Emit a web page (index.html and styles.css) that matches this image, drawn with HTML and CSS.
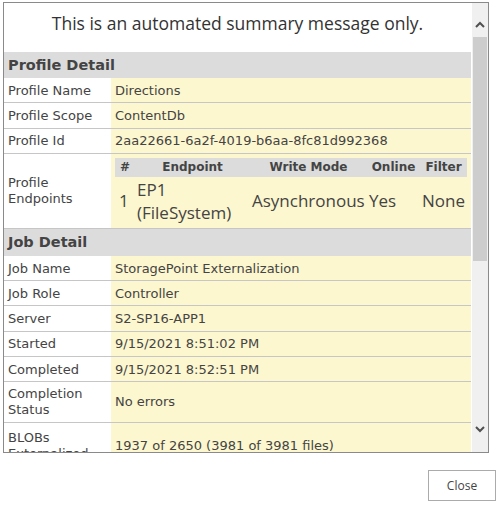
FILE: index.html
```html
<!DOCTYPE html>
<html lang="en">
<head>
  <meta charset="UTF-8">
  <title>Job Summary</title>
  <link rel="stylesheet" href="styles.css">
</head>
<body>
  <div class="frame">
    <div class="scroll-area">
      <div class="intro">This is an automated summary message only.</div>

      <div class="section">Profile Detail</div>
      <table class="details">
        <tr><td class="label">Profile Name</td><td class="value">Directions</td></tr>
        <tr><td class="label">Profile Scope</td><td class="value">ContentDb</td></tr>
        <tr><td class="label">Profile Id</td><td class="value">2aa22661-6a2f-4019-b6aa-8fc81d992368</td></tr>
        <tr class="ep-row">
          <td class="label">Profile Endpoints</td>
          <td class="value">
            <table class="endpoints">
              <tr>
                <th class="c-num">#</th>
                <th class="c-ep">Endpoint</th>
                <th class="c-mode">Write Mode</th>
                <th class="c-online">Online</th>
                <th>Filter</th>
              </tr>
              <tr><td>1</td><td>EP1 (FileSystem)</td><td>Asynchronous</td><td>Yes</td><td>None</td></tr>
            </table>
          </td>
        </tr>
      </table>

      <div class="section section-job">Job Detail</div>
      <table class="details">
        <tr><td class="label">Job Name</td><td class="value">StoragePoint Externalization</td></tr>
        <tr><td class="label">Job Role</td><td class="value">Controller</td></tr>
        <tr><td class="label">Server</td><td class="value">S2-SP16-APP1</td></tr>
        <tr><td class="label">Started</td><td class="value">9/15/2021 8:51:02 PM</td></tr>
        <tr><td class="label">Completed</td><td class="value">9/15/2021 8:52:51 PM</td></tr>
        <tr class="tall"><td class="label">Completion Status</td><td class="value">No errors</td></tr>
        <tr class="tall last"><td class="label">BLOBs Externalized</td><td class="value">1937 of 2650 (3981 of 3981 files)</td></tr>
      </table>
    </div>

    <div class="scrollbar">
      <div class="arrow arrow-up">
        <svg width="10" height="7" viewBox="0 0 10 7"><path d="M1 6 L5 2 L9 6" fill="none" stroke="#505050" stroke-width="2"/></svg>
      </div>
      <div class="track">
        <div class="thumb"></div>
      </div>
      <div class="arrow arrow-down">
        <svg width="10" height="7" viewBox="0 0 10 7"><path d="M1 1 L5 5 L9 1" fill="none" stroke="#505050" stroke-width="2"/></svg>
      </div>
    </div>
  </div>

  <div class="footer">
    <button class="btn">Close</button>
  </div>
</body>
</html>
```

FILE: styles.css
```css
body {
  margin: 0;
  padding: 2px 0 0 3px;
  background: #fff;
  font-family: "DejaVu Sans", Verdana, sans-serif;
  color: #444;
}

.frame {
  display: flex;
  width: 484px;
  height: 449px;
  border: 1px solid #8a8a8a;
  overflow: hidden;
}

.scroll-area {
  flex: 1;
  overflow: hidden;
}

.intro {
  height: 49px;
  line-height: 40px;
  text-align: center;
  font-family: "Open Sans", "Noto Sans", sans-serif;
  font-size: 17.5px;
  color: #333;
}

.section {
  height: 26px;
  line-height: 26px;
  padding-left: 4px;
  background: #dcdcdc;
  font-size: 14.5px;
  font-weight: bold;
  color: #444;
}

.section-job {
  height: 27px;
  line-height: 27px;
}

.details {
  width: 100%;
  border-collapse: collapse;
}

.details > tbody > tr > td {
  border-bottom: 1px solid #c6c6c6;
  padding: 0 4px;
  height: 24.3px;
  font-size: 13px;
  vertical-align: middle;
}

.details .label {
  width: 99px;
  background: #fff;
}

.details .value {
  background: #fdf7cf;
}

.details .tall > td {
  height: 40px;
  line-height: 16px;
}

.details .last > td {
  height: 46px;
}

.details .ep-row > td {
  line-height: 16px;
}

.details .ep-row > .value {
  padding: 4px 4px 0 4px;
  vertical-align: top;
}

.endpoints {
  width: 100%;
  table-layout: fixed;
  border-collapse: collapse;
}

.endpoints th {
  background: #dcdcdc;
  font-size: 12px;
  height: 19px;
  padding: 0;
  color: #444;
}

.endpoints .c-num {
  width: 20px;
}

.endpoints .c-ep {
  width: 115px;
}

.endpoints .c-mode {
  width: 117px;
}

.endpoints .c-online {
  width: 53px;
}

.endpoints td {
  font-family: "Open Sans", "Noto Sans", sans-serif;
  font-size: 17px;
  line-height: 23px;
  padding: 1px 2px 4px 2px;
  color: #444;
}

.endpoints td:first-child {
  padding-left: 4px;
}

.scrollbar {
  width: 16px;
  margin-left: 1px;
  display: flex;
  flex-direction: column;
  background: #f0f0f0;
}

.arrow {
  height: 34px;
  box-sizing: border-box;
  display: flex;
  justify-content: center;
}

.arrow-up {
  align-items: flex-end;
  padding-bottom: 9px;
}

.arrow-down {
  align-items: flex-start;
  padding-top: 8px;
}

.track {
  flex: 1;
}

.thumb {
  height: 224px;
  margin: 0 1px;
  background: #cdcdcd;
}

.footer {
  display: flex;
  justify-content: flex-end;
  padding: 17px 5px 0 0;
}

.btn {
  width: 68px;
  height: 31px;
  background: #fff;
  border: 1px solid #ababab;
  font-family: "Open Sans", "Noto Sans", sans-serif;
  font-size: 12px;
  color: #444;
}
```
